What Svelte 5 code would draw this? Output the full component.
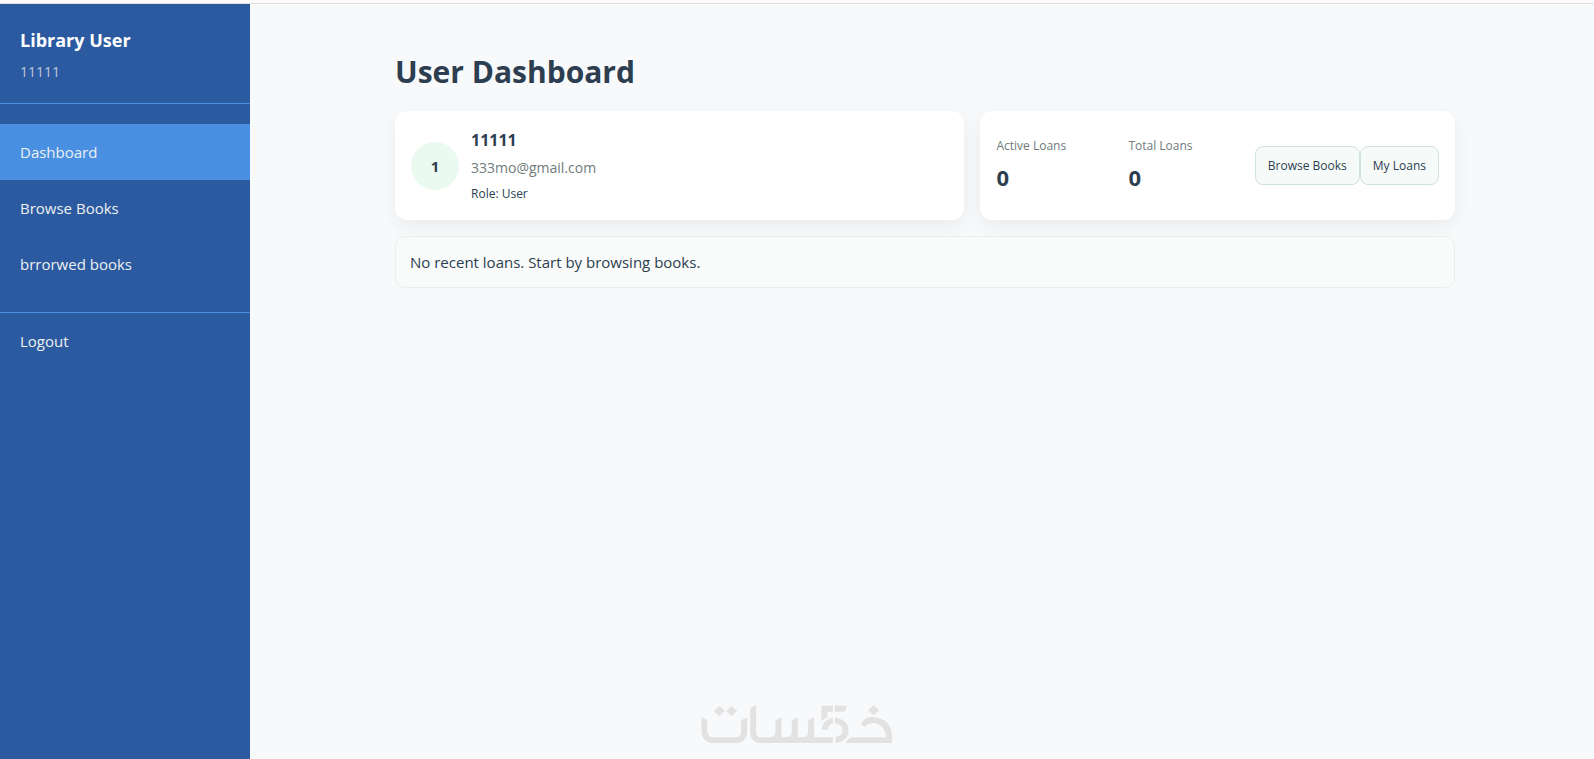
<script lang="ts">
    let user = {
        name: '11111',
        email: '333mo@gmail.com',
        role: 'User',
    };

    let activeLoans = 0;
    let totalLoans = 0;
    let current = 'Dashboard';

    const links = ['Dashboard', 'Browse Books', 'brrorwed books'];
</script>

<div class="page">
    <header class="topbar"></header>
    <div class="layout">
        <aside class="sidebar">
            <div class="sidebar-header">
                <h2>Library User</h2>
                <p>{user.name}</p>
            </div>
            <nav>
                {#each links as link}
                    <a href="#top" class:active={current === link} on:click|preventDefault={() => (current = link)}>{link}</a>
                {/each}
            </nav>
            <div class="sidebar-footer">
                <button type="button" class="logout">Logout</button>
            </div>
        </aside>

        <main>
            <div class="container">
                <h1>User Dashboard</h1>
                <div class="cards">
                    <section class="card profile">
                        <div class="avatar">{user.name[0]}</div>
                        <div class="details">
                            <h3>{user.name}</h3>
                            <p class="email">{user.email}</p>
                            <p class="role">Role: {user.role}</p>
                        </div>
                    </section>
                    <section class="card stats">
                        <div class="stat">
                            <p class="stat-label">Active Loans</p>
                            <p class="stat-value">{activeLoans}</p>
                        </div>
                        <div class="stat">
                            <p class="stat-label">Total Loans</p>
                            <p class="stat-value">{totalLoans}</p>
                        </div>
                        <div class="actions">
                            <button type="button">Browse Books</button>
                            <button type="button">My Loans</button>
                        </div>
                    </section>
                </div>
                <div class="empty">No recent loans. Start by browsing books.</div>
            </div>
        </main>
    </div>

    <svg class="watermark" viewBox="30 27 579 120" role="img" aria-label="Khamsat">
        <g fill="#e2e2e2">
            <path d="M33 67 L50 76 V104 Q50 127 72 127 H134 Q152 127 152 108 V76 L170 67 V108 Q170 144 134 144 H72 Q33 144 33 104 Z" />
            <path d="M87 33 L103 48 L87 63 L70 48 Z M123 33 L140 48 L123 63 L107 48 Z" />
            <path d="M179 39 L197 30 V112 Q197 127 212 127 H238 Q255 127 255 110 V76 L273 67 V127 H287 Q304 127 304 110 V76 L322 67 V127 H335 Q353 127 353 110 V76 L371 67 V127 H427 V144 H214 Q179 144 179 110 Z" />
            <path d="M393 32 H427 V50 H411 V66 L393 77 Z M433 32 H470 L463 50 H433 Z" />
            <path d="M393 104 Q397 74 427 68 V85 Q412 90 412 104 Z M433 68 Q474 73 474 107 Q474 137 435 144 V126 Q456 121 456 107 Q456 88 433 85 Z" />
            <path d="M549 31 L566 46 L549 61 L532 46 Z" />
            <path d="M510 89 Q520 66 546 66 Q605 70 605 130 V144 H463 L480 127 H587 Q582 85 546 84 Q532 84 525 95 Z" />
        </g>
    </svg>
</div>

<style>
    :global(body) {
        margin: 0;
        background: #f8f9fb;
    }
    .page {
        min-height: 100vh;
        display: flex;
        flex-direction: column;
        font-family: 'Segoe UI', 'Open Sans', 'Noto Sans', sans-serif;
        font-size: 15px;
        line-height: 26px;
        color: #2c3e50;
    }
    h1, h2, h3, p {
        margin: 0;
    }
    button {
        font-family: inherit;
        cursor: pointer;
    }
    .topbar {
        height: 3px;
        background: #fbf9f9;
        border-bottom: 1px solid #e0e0e0;
    }
    .layout {
        flex: 1;
        display: flex;
    }
    .sidebar {
        width: 250px;
        flex-shrink: 0;
        background: #2c5aa0;
        color: #ecf0f1;
    }
    .sidebar-header {
        padding: 20px;
        border-bottom: 1px solid #4a90e2;
    }
    .sidebar-header h2 {
        font-size: 18px;
        line-height: 32px;
        color: #fff;
    }
    .sidebar-header p {
        font-size: 14px;
        line-height: 22px;
        padding-top: 5px;
        color: #bdc9dc;
    }
    nav {
        display: flex;
        flex-direction: column;
        padding: 20px 0;
    }
    nav a {
        padding: 15px 20px;
        color: #ecf0f1;
        text-decoration: none;
    }
    nav a.active {
        background: #4a90e2;
    }
    .sidebar-footer {
        border-top: 1px solid #4a90e2;
        padding: 15px 20px;
    }
    .logout {
        padding: 0;
        border: none;
        background: none;
        color: #ecf0f1;
        font-size: 15px;
        line-height: 26px;
    }
    main {
        flex: 1;
        padding: 40px 20px 40px 26px;
    }
    .container {
        max-width: 1060px;
        margin: 0 auto;
    }
    h1 {
        font-size: 30px;
        line-height: 55px;
        margin-bottom: 12px;
    }
    .cards {
        display: grid;
        grid-template-columns: 1.2fr 1fr;
        gap: 16px;
        margin-bottom: 16px;
    }
    .card {
        display: flex;
        align-items: center;
        padding: 16px;
        background: #fff;
        border-radius: 12px;
        box-shadow: 0 6px 18px rgba(0, 0, 0, 0.06);
    }
    .profile {
        gap: 12px;
    }
    .avatar {
        display: grid;
        place-items: center;
        width: 48px;
        height: 48px;
        border-radius: 50%;
        background: #eafaf1;
        font-weight: 700;
    }
    .details {
        display: grid;
        gap: 4px;
    }
    .details h3 {
        font-size: 16px;
        line-height: 26px;
    }
    .email {
        font-size: 14px;
        line-height: 22px;
        color: #6f7b7c;
    }
    .role {
        font-size: 12px;
        line-height: 21px;
    }
    .stats {
        justify-content: space-between;
    }
    .stat-label {
        font-size: 12px;
        line-height: 20px;
        color: #6f7b7c;
    }
    .stat-value {
        font-size: 22px;
        line-height: 35px;
        padding-top: 4px;
        font-weight: 700;
    }
    .actions {
        display: flex;
    }
    .actions button {
        padding: 8px 12px;
        border: 1px solid #cfe3da;
        border-radius: 8px;
        background: #f6fbf9;
        color: #2c3e50;
        font-size: 12px;
        line-height: 21px;
    }
    .empty {
        padding: 12px 14px;
        border: 1px solid #e8f0ec;
        border-radius: 10px;
        background: #f9fbfa;
    }
    .watermark {
        position: fixed;
        left: 50%;
        bottom: 15px;
        width: 193px;
        height: 40px;
        transform: translateX(-50%);
        pointer-events: none;
    }
</style>
